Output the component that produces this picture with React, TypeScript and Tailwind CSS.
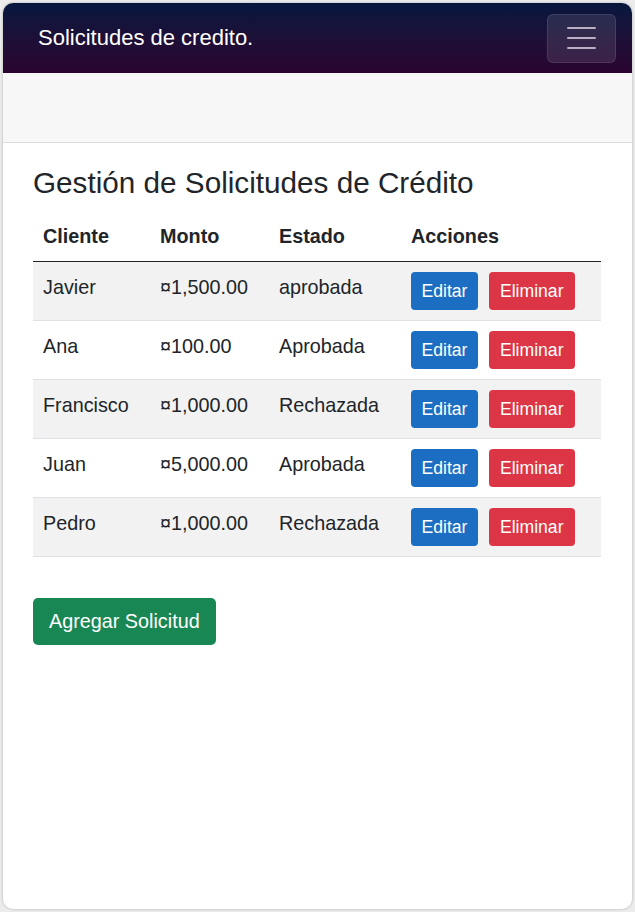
import React from "react";

const rows = [
  { c: "Javier", m: "¤1,500.00", e: "aprobada" },
  { c: "Ana", m: "¤100.00", e: "Aprobada" },
  { c: "Francisco", m: "¤1,000.00", e: "Rechazada" },
  { c: "Juan", m: "¤5,000.00", e: "Aprobada" },
  { c: "Pedro", m: "¤1,000.00", e: "Rechazada" },
];

export default function App() {
  return (
    <div className="w-[635px] h-[912px] bg-[#ececec] p-[3px] pb-[3px] font-['Liberation_Sans',Arial,sans-serif] text-[#212529]">
      <div className="h-[906px] w-[629px] bg-white rounded-[10px] overflow-hidden shadow-[0_0_3px_rgba(0,0,0,0.25)] flex flex-col">
        <nav className="h-[70px] shrink-0 bg-gradient-to-b from-[#05173f] to-[#2a0430] flex items-center justify-between pl-[35px] pr-[16px]">
          <span className="text-white text-[22px] leading-none">Solicitudes de credito.</span>
          <button className="w-[69px] h-[49px] rounded-[6px] bg-white/10 border border-white/10 flex flex-col items-center justify-center gap-[8px]">
            <span className="block w-[29px] h-[2px] bg-[#b9aec4] rounded"></span>
            <span className="block w-[29px] h-[2px] bg-[#b9aec4] rounded"></span>
            <span className="block w-[29px] h-[2px] bg-[#b9aec4] rounded"></span>
          </button>
        </nav>
        <div className="h-[70px] shrink-0 bg-[#f7f7f7] border-b border-[#dcdcdc]"></div>
        <main className="px-[30px] pt-[22px]">
          <h3 className="text-[29.7px] leading-[1.2] mb-[11px]">Gestión de Solicitudes de Crédito</h3>
          <table className="w-[568px] border-collapse text-[19.8px] leading-[1.5]">
            <thead>
              <tr className="border-b border-[#212529]">
                <th className="w-[117px] text-left font-bold px-[10px] py-[10px]">Cliente</th>
                <th className="w-[119px] text-left font-bold px-[10px] py-[10px]">Monto</th>
                <th className="w-[132px] text-left font-bold px-[10px] py-[10px]">Estado</th>
                <th className="text-left font-bold px-[10px] py-[10px]">Acciones</th>
              </tr>
            </thead>
            <tbody>
              {rows.map((r, i) => (
                <tr key={i} className={`border-b border-[#dee2e6] ${i % 2 === 0 ? "bg-[#f2f2f2]" : "bg-white"}`}>
                  <td className="px-[10px] pt-[11px] pb-[9px] align-top">{r.c}</td>
                  <td className="px-[10px] pt-[11px] pb-[9px] align-top">{r.m}</td>
                  <td className="px-[10px] pt-[11px] pb-[9px] align-top">{r.e}</td>
                  <td className="px-[10px] pt-[10px] pb-[10px] align-top">
                    <div className="flex gap-[11px]">
                      <button className="h-[38px] px-[10.5px] rounded-[4px] bg-[#1b6ec2] text-white text-[17.6px] leading-none">Editar</button>
                      <button className="h-[38px] px-[11px] rounded-[4px] bg-[#dc3545] text-white text-[17.6px] leading-none">Eliminar</button>
                    </div>
                  </td>
                </tr>
              ))}
            </tbody>
          </table>
          <button className="mt-[41px] h-[47px] px-[16px] rounded-[5px] bg-[#198754] text-white text-[19.8px] leading-none">Agregar Solicitud</button>
        </main>
      </div>
    </div>
  );
}
